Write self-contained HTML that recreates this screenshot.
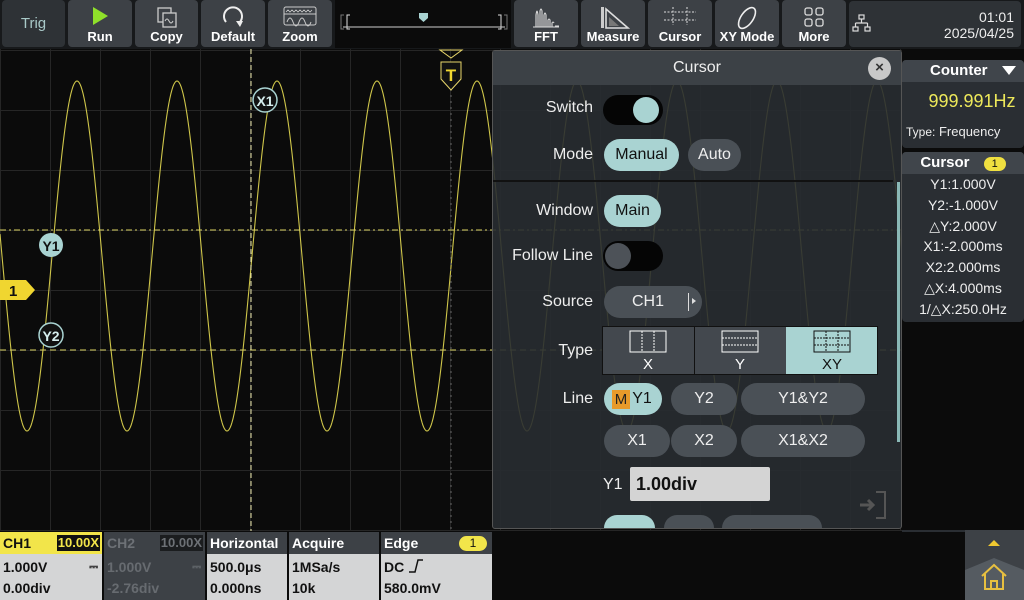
<!DOCTYPE html>
<html><head><meta charset="utf-8"><style>
*{box-sizing:border-box;margin:0;padding:0}
body{width:1024px;height:600px;background:#0b0b0b;font-family:"Liberation Sans",sans-serif;position:relative;overflow:hidden;color:#fff}
.a{position:absolute}
.btn{position:absolute;top:0;height:47px;background:#3d4146;border-radius:4px;text-align:center;color:#fff;font-size:13px;font-weight:bold}
.btn span{position:absolute;left:0;right:0;bottom:3px}
.btn svg{position:absolute;left:50%;top:5px;transform:translateX(-50%)}
.lbl{position:absolute;color:#eee;font-size:16px;text-align:right;width:100px}
.pill{position:absolute;height:32px;border-radius:16px;background:#4a5056;color:#eee;font-size:16px;text-align:center;line-height:32px}
.on{background:#a9d3d2;color:#111}
.sb{position:absolute;left:902px;width:122px;background:#2a2e33;border-radius:4px}
.sbh{background:#40454b;height:22px;text-align:center;font-weight:bold;font-size:15px;line-height:22px;border-radius:4px 4px 0 0}
.cv{font-size:14px;text-align:center;height:20.8px;line-height:21px;color:#eee}
.bh{position:absolute;top:532px;height:22px;font-weight:bold;font-size:14px;line-height:22px;padding-left:3px}
.bb{position:absolute;top:554px;height:46px;background:#d4d5d6;color:#111;font-weight:bold;font-size:14px;padding-left:3px;line-height:21px;padding-top:3px}
</style></head><body>
<div class="a" style="left:0;top:0;width:1024px;height:49px;background:#17191b"></div>
<div class="btn" style="left:2px;width:63px;background:#2e3236;font-weight:normal;color:#a9c9c8;font-size:15px;line-height:47px">Trig</div>
<div class="btn" style="left:68px;width:64px"><svg width="20" height="22"><polygon points="3,2 18,11 3,20" fill="#8fe02a"/></svg><span>Run</span></div>
<div class="btn" style="left:135px;width:63px"><svg width="24" height="24"><rect x="3" y="3" width="13" height="14" fill="none" stroke="#ccc" stroke-width="1.3"/><rect x="8" y="8" width="13" height="14" fill="#3d4146" stroke="#ccc" stroke-width="1.3"/><path d="M10 16 q2-4 4 0 t4 0" stroke="#ccc" fill="none"/></svg><span>Copy</span></div>
<div class="btn" style="left:201px;width:64px"><svg width="26" height="24"><path d="M6 17 A9 9 0 1 1 20 17" stroke="#eee" stroke-width="2" fill="none"/><polygon points="16,16 23,16 20,22" fill="#eee"/></svg><span>Default</span></div>
<div class="btn" style="left:268px;width:64px"><svg width="34" height="22"><rect x="1" y="2" width="32" height="18" rx="2" fill="none" stroke="#ccc"/><path d="M3 7 l2-2 2 2 2-2 2 2 2-2 2 2 2-2 2 2 2-2 2 2 2-2 2 2 2-2" stroke="#ccc" fill="none" stroke-width=".8"/><line x1="1" y1="9" x2="33" y2="9" stroke="#ccc"/><path d="M4 17 q3-8 6 0 t6 0 t6 0 t6 0" stroke="#ccc" fill="none"/></svg><span>Zoom</span></div>
<div class="a" style="left:335px;top:0;width:176px;height:48px;background:#0b0b0b"></div>
<svg class="a" style="left:338px;top:10px" width="172" height="24"><path d="M6 5 h-3 v14 h3 M166 5 h3 v14 h-3" stroke="#777" fill="none"/><path d="M12 5 h-3 v14 h3 M160 5 h3 v14 h-3" stroke="#ddd" fill="none"/><line x1="5" y1="17" x2="167" y2="17" stroke="#ccc"/><path d="M81 3 h9 v5 l-4.5 4 l-4.5-4z" fill="#a9d3d2"/></svg>
<div class="btn" style="left:514px;width:64px"><svg width="30" height="24"><path d="M2 22 h26 M5 22 v-12 q1-8 2 0 v12 M9 22 v-16 q1-4 2 0 v16 M13 22 v-12 q1-4 2 0 v12 M17 22 v-7 q1-2 2 0 v7 M21 22 v-4 q1-2 2 0 M24 21 h4" stroke="#ddd" fill="none" stroke-width="1.1"/></svg><span>FFT</span></div>
<div class="btn" style="left:581px;width:64px"><svg width="34" height="26"><rect x="5" y="2" width="3" height="21" fill="#ccc"/><path d="M10 4 v19 h22z" fill="none" stroke="#ddd" stroke-width="1.6"/><path d="M13 12 v9 h10z" fill="#777"/></svg><span>Measure</span></div>
<div class="btn" style="left:648px;width:64px"><svg width="36" height="22"><path d="M2 7 h32 M2 15 h32 M11 2 v18 M25 2 v18" stroke="#ddd" stroke-dasharray="2 1.5" fill="none"/></svg><span>Cursor</span></div>
<div class="btn" style="left:715px;width:64px"><svg width="30" height="26"><ellipse cx="15" cy="13" rx="6" ry="12" transform="rotate(35 15 13)" fill="none" stroke="#eee" stroke-width="1.6"/></svg><span>XY Mode</span></div>
<div class="btn" style="left:782px;width:64px"><svg width="24" height="24"><g fill="none" stroke="#ddd" stroke-width="1.3"><rect x="3" y="3" width="7" height="7" rx="2"/><rect x="14" y="3" width="7" height="7" rx="2"/><rect x="3" y="14" width="7" height="7" rx="2"/><rect x="14" y="14" width="7" height="7" rx="2"/></g></svg><span>More</span></div>
<div class="a" style="left:849px;top:1px;width:172px;height:46px;background:#2e3236;border-radius:4px;font-size:14px;text-align:right;padding:8px 7px 0 0;line-height:16px;color:#eee">01:01<br>2025/04/25</div>
<svg class="a" style="left:852px;top:14px" width="20" height="20"><g fill="none" stroke="#ddd" stroke-width="1.2"><rect x="7" y="1" width="5" height="4"/><rect x="1" y="13" width="5" height="4"/><rect x="13" y="13" width="5" height="4"/><path d="M9.5 5 v4 M3.5 9 h12 M3.5 9 v4 M15.5 9 v4"/></g></svg>

<svg class="a" style="left:0;top:49px" width="902" height="482" id="scr">
<g stroke="#262626" stroke-width="1" id="grid"></g>
<path id="wave" fill="none" stroke="#cfc64a" stroke-width="1.1"/>
<line x1="0" y1="181" x2="902" y2="181" stroke="#d8d060" stroke-dasharray="6 3 2 3"/>
<line x1="0" y1="301" x2="902" y2="301" stroke="#d8d060" stroke-dasharray="6 4"/>
<line x1="251" y1="0" x2="251" y2="482" stroke="#f2eeb0" stroke-dasharray="5 3"/>
<line x1="451" y1="40" x2="451" y2="482" stroke="#666" stroke-dasharray="2 4"/>
<circle cx="265" cy="51" r="12" fill="#111" stroke="#a9d3d2" stroke-width="1.5"/><text x="265" y="57" fill="#d6eeee" font-size="14" font-weight="bold" text-anchor="middle" font-family="Liberation Sans">X1</text>
<circle cx="51" cy="196" r="12" fill="#a9d3d2"/><text x="51" y="202" fill="#111" font-size="14" font-weight="bold" text-anchor="middle" font-family="Liberation Sans">Y1</text>
<circle cx="51" cy="286" r="12" fill="#111" stroke="#a9d3d2" stroke-width="1.5"/><text x="51" y="292" fill="#d6eeee" font-size="14" font-weight="bold" text-anchor="middle" font-family="Liberation Sans">Y2</text>
<path d="M0 231 h26 l9 10 l-9 10 h-26z" fill="#f0d630"/><text x="9" y="247" fill="#111" font-size="15" font-weight="bold" font-family="Liberation Sans">1</text>
<path d="M440 1 h22 l-11 8z" fill="none" stroke="#e8d66a"/><path d="M441 13 h20 v17 l-10 11 l-10-11z" fill="#111" stroke="#e8d66a"/><text x="451" y="32" fill="#f0d630" font-size="17" font-weight="bold" text-anchor="middle" font-family="Liberation Sans">T</text>
</svg>

<div class="a" style="left:492px;top:50px;width:410px;height:479px;background:rgba(40,44,49,.9);border:1px solid #555;border-radius:3px"></div>
<div class="a" style="left:493px;top:51px;width:408px;height:34px;background:#3c4146;text-align:center;font-size:16px;line-height:34px;color:#eee">Cursor</div>
<div class="a" style="left:868px;top:57px;width:23px;height:23px;border-radius:50%;background:#c8c8c8;color:#333;font-weight:bold;text-align:center;line-height:22px;font-size:15px">×</div>
<div class="a" style="left:493px;top:180px;width:400px;height:2px;background:#111"></div>
<div class="a" style="left:897px;top:182px;width:3px;height:260px;background:#8ab8b6"></div>
<div class="lbl" style="left:493px;top:99px">Switch</div>
<div class="a" style="left:603px;top:95px;width:60px;height:30px;border-radius:15px;background:#050505"></div>
<div class="a" style="left:633px;top:97px;width:26px;height:26px;border-radius:50%;background:#a9d3d2"></div>
<div class="lbl" style="left:493px;top:146px">Mode</div>
<div class="pill on" style="left:604px;top:139px;width:75px">Manual</div>
<div class="pill" style="left:688px;top:139px;width:53px">Auto</div>
<div class="lbl" style="left:493px;top:202px">Window</div>
<div class="pill on" style="left:604px;top:195px;width:57px">Main</div>
<div class="lbl" style="left:493px;top:247px">Follow Line</div>
<div class="a" style="left:603px;top:241px;width:60px;height:30px;border-radius:15px;background:#050505"></div>
<div class="a" style="left:605px;top:243px;width:26px;height:26px;border-radius:50%;background:#4d5258"></div>
<div class="lbl" style="left:493px;top:293px">Source</div>
<div class="pill" style="left:604px;top:286px;width:98px;padding-right:10px">CH1</div>
<div class="a" style="left:688px;top:293px;width:1px;height:18px;background:#ddd"></div><div class="a" style="left:692px;top:298px;border-left:4px solid #ddd;border-top:3px solid transparent;border-bottom:3px solid transparent"></div>
<div class="lbl" style="left:493px;top:342px">Type</div>
<div class="a" style="left:602px;top:326px;width:276px;height:49px;border:1px solid #111;background:#43484e"></div>
<div class="a" style="left:694px;top:327px;width:1px;height:47px;background:#111"></div>
<div class="a" style="left:786px;top:327px;width:91px;height:47px;background:#a9d3d2"></div>
<svg class="a" style="left:603px;top:327px" width="274" height="47"><g fill="none" stroke-width="1"><rect x="27" y="4" width="36" height="21" stroke="#fff"/><path d="M39 4v21M51 4v21" stroke="#fff" stroke-dasharray="2 1"/><rect x="119" y="4" width="36" height="21" stroke="#fff"/><path d="M119 11h36M119 18h36" stroke="#fff" stroke-dasharray="2 1"/><rect x="211" y="4" width="36" height="21" stroke="#111"/><path d="M211 11h36M211 18h36M223 4v21M235 4v21" stroke="#111" stroke-dasharray="2 1"/></g><g font-family="Liberation Sans" font-size="15" text-anchor="middle"><text x="45" y="42" fill="#fff">X</text><text x="137" y="42" fill="#fff">Y</text><text x="229" y="42" fill="#111">XY</text></g></svg>
<div class="lbl" style="left:493px;top:390px">Line</div>
<div class="pill on" style="left:604px;top:383px;width:58px;padding-left:18px">Y1</div>
<div class="a" style="left:612px;top:390px;width:18px;height:19px;background:#e89a2a;color:#222;font-size:15px;text-align:center;line-height:19px">M</div>
<div class="pill" style="left:671px;top:383px;width:66px">Y2</div>
<div class="pill" style="left:741px;top:383px;width:124px">Y1&amp;Y2</div>
<div class="pill" style="left:604px;top:425px;width:66px">X1</div>
<div class="pill" style="left:671px;top:425px;width:66px">X2</div>
<div class="pill" style="left:741px;top:425px;width:124px">X1&amp;X2</div>
<div class="a" style="left:603px;top:476px;font-size:16px;color:#eee">Y1</div>
<div class="a" style="left:630px;top:467px;width:140px;height:34px;background:#d4d4d4;border-radius:2px;color:#111;font-weight:bold;font-size:18px;line-height:34px;padding-left:6px">1.00div</div>
<div class="pill on" style="left:604px;top:515px;width:51px;height:13px;border-radius:14px 14px 0 0"></div>
<div class="pill" style="left:664px;top:515px;width:50px;height:13px;border-radius:14px 14px 0 0"></div>
<div class="pill" style="left:722px;top:515px;width:100px;height:13px;border-radius:14px 14px 0 0"></div>
<svg class="a" style="left:858px;top:490px" width="30" height="30"><path d="M18 2h9v26h-9" stroke="#555" stroke-width="2" fill="none"/><path d="M2 15h12M10 10l5 5-5 5" stroke="#555" stroke-width="3" fill="none"/></svg>

<div class="sb" style="top:60px;height:88px"><div class="sbh" style="text-align:left;padding-left:28px">Counter <span style="position:absolute;right:8px;top:6px;border-top:9px solid #fff;border-left:7px solid transparent;border-right:7px solid transparent"></span></div>
<div style="color:#ede85a;font-size:18px;text-align:center;margin-top:9px;padding-left:18px">999.991Hz</div>
<div style="font-size:13px;color:#eee;margin:12px 0 0 4px"><span style="font-size:12px">Type:</span> Frequency</div></div>
<div class="sb" style="top:152px;height:170px"><div class="sbh">Cursor <span style="display:inline-block;background:#f0e040;color:#111;border-radius:8px;width:22px;height:14px;font-size:11px;line-height:14px;margin-left:10px;font-weight:normal">1</span></div>
<div class="cv">Y1:1.000V</div><div class="cv">Y2:-1.000V</div><div class="cv">△Y:2.000V</div><div class="cv">X1:-2.000ms</div><div class="cv">X2:2.000ms</div><div class="cv">△X:4.000ms</div><div class="cv">1/△X:250.0Hz</div></div>
<div class="a" style="left:902px;top:530px;width:122px;height:2px;background:#2a2e33"></div>

<div class="bh" style="left:0;width:102px;background:#f2e54a;color:#111">CH1<span style="position:absolute;right:2px;top:3px;background:#111;color:#f2e54a;font-size:13px;line-height:16px;padding:0 1px">10.00X</span></div>
<div class="bb" style="left:0;width:102px">1.000V<span style="position:absolute;right:4px;font-size:11px">⎓</span><br>0.00div</div>
<div class="bh" style="left:104px;width:101px;background:#3d4146;color:#6d7176">CH2<span style="position:absolute;right:2px;top:3px;background:#1b1d1f;color:#6d7176;font-size:13px;line-height:16px;padding:0 1px">10.00X</span></div>
<div class="bb" style="left:104px;width:101px;background:#3d4146;color:#676b70">1.000V<span style="position:absolute;right:4px;font-size:11px">⎓</span><br>-2.76div</div>
<div class="bh" style="left:207px;width:80px;background:#3d4146;color:#fff">Horizontal</div>
<div class="bb" style="left:207px;width:80px">500.0μs<br>0.000ns</div>
<div class="bh" style="left:289px;width:90px;background:#3d4146;color:#fff">Acquire</div>
<div class="bb" style="left:289px;width:90px">1MSa/s<br>10k</div>
<div class="bh" style="left:381px;width:111px;background:#3d4146;color:#fff">Edge<span style="position:absolute;right:5px;top:4px;background:#f2e54a;color:#111;border-radius:8px;width:28px;height:15px;font-size:12px;line-height:15px;text-align:center;font-weight:normal">1</span></div>
<div class="bb" style="left:381px;width:111px">DC <svg width="16" height="14" style="vertical-align:-1px"><path d="M1 13h6l3-12h5" stroke="#111" stroke-width="1.5" fill="none"/></svg><br>580.0mV</div>
<div class="a" style="left:965px;top:530px;width:59px;height:70px;background:#3d4146"></div>
<div class="a" style="left:988px;top:540px;border-bottom:6px solid #f0c830;border-left:6px solid transparent;border-right:6px solid transparent"></div>
<svg class="a" style="left:965px;top:552px" width="59" height="48"><path d="M0 18 L29 6 L59 18 V48 H0z" fill="#555b61"/><path d="M17 24 l12-11 12 11 M20 22v15h18v-15 M26 37v-8h6v8" stroke="#e8c040" stroke-width="2" fill="none"/></svg>

<script>
var g=document.getElementById('grid'),s='';
for(var x=0;x<=900;x+=50)s+='<line x1="'+(x+0.5)+'" y1="0" x2="'+(x+0.5)+'" y2="482"/>';
for(var y=1;y<482;y+=60)s+='<line x1="0" y1="'+(y+0.5)+'" x2="902" y2="'+(y+0.5)+'"/>';
g.innerHTML=s;
var d='';for(var x=0;x<=902;x+=1){var yy=207-175*Math.cos(2*Math.PI*(x-77)/100);d+=(x?'L':'M')+x+' '+yy.toFixed(1);}
document.getElementById('wave').setAttribute('d',d);
</script>
</body></html>
